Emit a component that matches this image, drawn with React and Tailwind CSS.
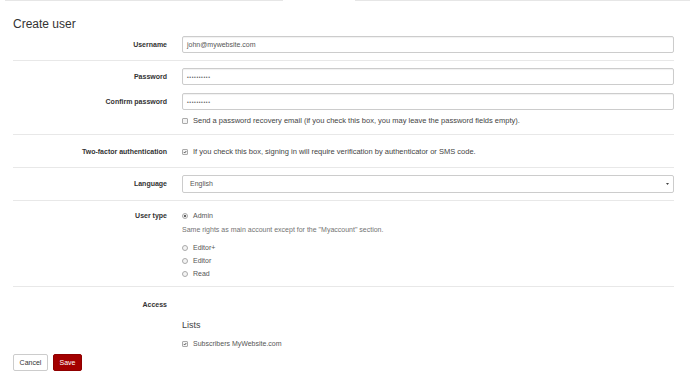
import React from 'react';

const Label = ({ children }) => (
  <div className="w-[154px] shrink-0 text-right font-bold text-[#333]">{children}</div>
);

const Box = ({ checked }) => (
  <span className="inline-flex w-[6px] h-[6px] shrink-0 items-center justify-center rounded-[1px] border border-[#aaa] bg-[#f4f4f4]">
    {checked && (
      <svg viewBox="0 0 10 10" className="w-[6px] h-[6px]">
        <path d="M2 5.2 L4.2 7.4 L8.2 2.6" fill="none" stroke="#222" strokeWidth="1.8" />
      </svg>
    )}
  </span>
);

const Radio = ({ checked }) => (
  <span className="inline-flex w-[6px] h-[6px] shrink-0 items-center justify-center rounded-full border border-[#aaa] bg-[#f4f4f4]">
    {checked && <span className="w-[2px] h-[2px] rounded-full bg-[#333]" />}
  </span>
);

const Input = ({ children }) => (
  <div className="flex h-[17px] items-center rounded-[2px] border border-[#ccc] bg-white pl-[4px] text-[#555] shadow-[inset_0_1px_1px_rgba(0,0,0,0.06)]">
    {children}
  </div>
);

const Dots = () => (
  <span className="text-[5px] tracking-[0.6px] text-[#666]">••••••••••</span>
);

export default function App() {
  return (
    <div className="w-[690px] h-[379px] overflow-hidden bg-white text-[7px] leading-[12px] font-['Liberation_Sans',Arial,sans-serif]">
      <div className="flex h-px">
        <div className="ml-[5px] w-[278px] bg-[#e6e6e6]" />
        <div className="ml-[72px] flex-1 bg-[#e6e6e6]" />
      </div>

      <div className="mx-[13px] w-[661px]">
        <h1 className="pt-[15px] pb-[4px] text-[12px] leading-[16px] text-[#333]">Create user</h1>

        <div className="flex items-center gap-[15px] pb-[7px]">
          <Label>Username</Label>
          <div className="flex-1">
            <Input>john@mywebsite.com</Input>
          </div>
        </div>

        <div className="border-t border-[#e8e8e8] pt-[7px] pb-[7px]">
          <div className="flex items-center gap-[15px]">
            <Label>Password</Label>
            <div className="flex-1">
              <Input><Dots /></Input>
            </div>
          </div>
          <div className="mt-[8px] flex items-center gap-[15px]">
            <Label>Confirm password</Label>
            <div className="flex-1">
              <Input><Dots /></Input>
            </div>
          </div>
          <div className="mt-[5px] flex gap-[15px]">
            <div className="w-[154px] shrink-0" />
            <div className="flex items-center gap-[5px] text-[7.5px] text-[#444]">
              <Box />
              <span>Send a password recovery email (if you check this box, you may leave the password fields empty).</span>
            </div>
          </div>
        </div>

        <div className="flex items-center gap-[15px] border-t border-[#e8e8e8] pt-[11px] pb-[9px]">
          <Label>Two-factor authentication</Label>
          <div className="flex items-center gap-[5px] text-[7.5px] text-[#444]">
            <Box checked />
            <span>If you check this box, signing in will require verification by authenticator or SMS code.</span>
          </div>
        </div>

        <div className="flex items-center gap-[15px] border-t border-[#e8e8e8] pt-[7px] pb-[7px]">
          <Label>Language</Label>
          <div className="flex-1">
            <div className="flex h-[18px] items-center justify-between rounded-[2px] border border-[#ccc] bg-white pl-[7px] pr-[4px] text-[#555]">
              <span>English</span>
              <svg viewBox="0 0 6 4" className="w-[3px] h-[2px]">
                <path d="M0 0 H6 L3 4 Z" fill="#444" />
              </svg>
            </div>
          </div>
        </div>

        <div className="border-t border-[#e8e8e8] pt-[9px] pb-[6px]">
          <div className="flex gap-[15px]">
            <Label>User type</Label>
            <div className="flex-1 text-[#555]">
              <div className="flex items-center gap-[5px]">
                <Radio checked />
                <span>Admin</span>
              </div>
              <div className="mt-[2px] text-[#737373]">Same rights as main account except for the "Myaccount" section.</div>
              <div className="mt-[6px] flex items-center gap-[5px]">
                <Radio />
                <span>Editor+</span>
              </div>
              <div className="mt-[1px] flex items-center gap-[5px]">
                <Radio />
                <span>Editor</span>
              </div>
              <div className="mt-[1px] flex items-center gap-[5px]">
                <Radio />
                <span>Read</span>
              </div>
            </div>
          </div>
        </div>

        <div className="border-t border-[#e8e8e8] pt-[12px]">
          <div className="flex gap-[15px]">
            <Label>Access</Label>
          </div>
          <div className="flex gap-[15px]">
            <div className="w-[154px] shrink-0" />
            <div className="flex-1 text-[#555]">
              <div className="mt-[7px] text-[9px] leading-[14px] text-[#444]">Lists</div>
              <div className="mt-[6px] flex items-center gap-[5px]">
                <Box checked />
                <span>Subscribers MyWebsite.com</span>
              </div>
            </div>
          </div>
        </div>

        <div className="mt-[4px] flex gap-[5px]">
          <button className="h-[17px] w-[35px] rounded-[2px] border border-[#ccc] bg-white text-[7px] text-[#333]">Cancel</button>
          <button className="h-[17px] w-[29px] rounded-[2px] border border-[#8f0000] bg-[#a30000] text-[7px] text-white">Save</button>
        </div>
      </div>
    </div>
  );
}
